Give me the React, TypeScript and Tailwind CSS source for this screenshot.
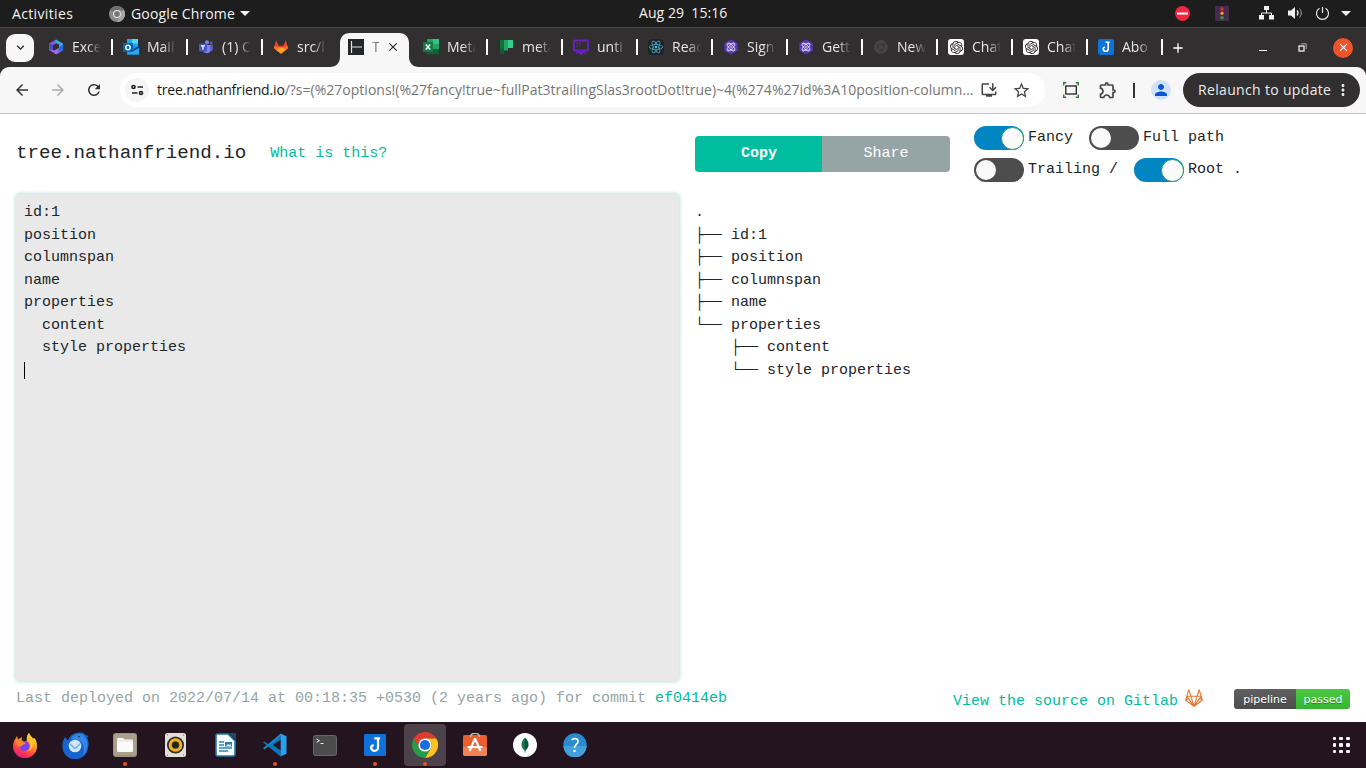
import React from "react";
import { SiReact, SiOpenai, SiGooglechrome } from "react-icons/si";
import {
  MdOutlineInstallDesktop,
  MdStarBorder,
  MdOutlineExtension,
  MdPerson,
  MdMoreVert,
  MdRefresh,
  MdArrowBack,
  MdArrowForward,
  MdClose,
  MdAdd,
  MdKeyboardArrowDown,
} from "react-icons/md";

const UI = "font-['Open_Sans','Noto_Sans',sans-serif]";
const MONO = "font-['Liberation_Mono',monospace]";

const CopilotIcon = () => (
  <svg width="16" height="16" viewBox="0 0 16 16">
    <path d="M8 .5 1 4.5v6.500L5 13V6l5-2.500z" fill="#7c5ce0" />
    <path d="M8 .5 15 4.500v7L11 8V5.500L7 3.500z" fill="#37a9ee" />
    <path d="M1 10.500 8 15.500l7-4L11 9 6 11.500z" fill="#9a6bea" />
    <path d="M11 8 15 6v5.500L10.500 13z" fill="#286ce0" />
    <path d="m1 4.500 4 1.500v5L1 10z" fill="#5748c8" />
  </svg>
);

const OutlookIcon = () => (
  <svg width="16" height="16" viewBox="0 0 16 16">
    <rect x="4" y="0" width="11" height="9" fill="#28a8ea" />
    <rect x="9" y="0" width="6" height="4.500" fill="#50d9ff" />
    <path d="M4 7h12v8.500H4z" fill="#1490df" />
    <path d="m4 14 12-7v8.500H4z" fill="#28a8ea" />
    <path d="M10 10.500 16 7v2l-6 3z" fill="#0a3a73" />
    <rect x="0" y="4" width="10" height="9" rx=".8" fill="#0364b8" />
    <circle cx="5" cy="8.500" r="2.200" fill="none" stroke="#fff" strokeWidth="1.400" />
  </svg>
);

const TeamsIcon = () => (
  <svg width="16" height="16" viewBox="0 0 16 16">
    <circle cx="9" cy="3.300" r="2.100" fill="#7b83eb" />
    <circle cx="13.200" cy="4" r="1.500" fill="#5059c9" />
    <path d="M10 6h5v4.500a2.600 2.600 0 0 1-5 0z" fill="#5059c9" />
    <path d="M5 6h7.500v5a3.800 3.800 0 0 1-7.500 0z" fill="#7b83eb" />
    <rect x="1" y="4.500" width="8" height="8" rx=".8" fill="#4b53bc" />
    <path d="M3 6.800h4M5 6.800v4" stroke="#fff" strokeWidth="1.200" />
  </svg>
);

const FoxIcon = () => (
  <svg width="18" height="16" viewBox="0 0 18 16">
    <path d="M9 15.500 1 9.500 3.500.5l3 6h5l3-6L17 9.500z" fill="#e24329" />
    <path d="m9 15.500-6-4.500 3-2.500h6l3 2.500z" fill="#fca326" />
    <path d="M1 9.500 2 6.500c2 .3 3.500 1.300 4.500 2.500L4 11.700zM17 9.500l-1-3c-2 .3-3.500 1.300-4.500 2.500l2.500 2.700z" fill="#fc6d26" />
  </svg>
);

const TreeIcon = () => (
  <svg width="16" height="16" viewBox="0 0 16 16">
    <rect width="16" height="16" fill="#23282c" />
    <path d="M3.500 2v12M3.500 8H14" stroke="#dfe3e4" strokeWidth="1.200" fill="none" />
  </svg>
);

const ExcelIcon = () => (
  <svg width="16" height="16" viewBox="0 0 16 16">
    <rect x="4" y="0" width="6" height="5" fill="#21a366" />
    <rect x="10" y="0" width="6" height="5" fill="#33c481" />
    <rect x="4" y="5" width="6" height="5.500" fill="#107c41" />
    <rect x="10" y="5" width="6" height="5.500" fill="#21a366" />
    <rect x="4" y="10.500" width="12" height="5" fill="#185c37" />
    <rect x="0" y="3" width="10" height="10" rx=".6" fill="#107c41" />
    <path d="m2.800 5.500 4.400 5m0-5-4.400 5" stroke="#fff" strokeWidth="1.500" />
  </svg>
);

const PlannerIcon = () => (
  <svg width="16" height="16" viewBox="0 0 16 16">
    <rect x="2" y="1" width="4" height="14" fill="#0f703b" />
    <rect x="6" y="1" width="4" height="10.500" fill="#21a366" />
    <rect x="10" y="1" width="5" height="8" fill="#33d08a" />
    <path d="M2 9.500h4V15H2z" fill="#185c37" />
  </svg>
);

const BoardIcon = () => (
  <svg width="16" height="16" viewBox="0 0 16 16" fill="none" stroke="#6b1fc0">
    <rect x="1" y="1.500" width="14" height="10" rx=".6" strokeWidth="1.900" />
    <path d="m3 15 2-3 2 3 1-1.500L9 15l2-3 2 3" strokeWidth="1.400" />
    <path d="M3.500 4.500H5M6 4.500h2M3.500 7H5M6 7h1" strokeWidth="1.300" />
  </svg>
);

const HexAtom = () => (
  <svg width="16" height="16" viewBox="0 0 16 16" fill="none" stroke="#e9e0fb">
    <path d="m8 .5 6.700 3.700v7.600L8 15.500l-6.700-3.700V4.200z" fill="#5a38b0" stroke="none" />
    <ellipse cx="8" cy="8" rx="5" ry="2" strokeWidth=".9" transform="rotate(45 8 8)" />
    <ellipse cx="8" cy="8" rx="5" ry="2" strokeWidth=".9" transform="rotate(-45 8 8)" />
    <path d="M4.500 5h7M4.500 11h7" strokeWidth=".7" />
    <circle cx="8" cy="8" r=".8" fill="#fff" stroke="none" />
  </svg>
);

const ReactTile = () => (
  <span className="flex size-4 items-center justify-center rounded-sm bg-[#20232a]">
    <SiReact size={14} color="#4fb9d3" />
  </span>
);

const GptIcon = () => (
  <span className="flex size-4 items-center justify-center rounded-[3px] bg-white">
    <SiOpenai size={13} color="#222" />
  </span>
);

const JIcon = ({ size = 16, round = 2.5 }: { size?: number; round?: number }) => (
  <svg width={size} height={size} viewBox="0 0 16 16">
    <rect width="16" height="16" rx={round} fill="#1071d8" />
    <path d="M7.500 3.200h4.200M10.200 3.200v6.500a2.500 2.500 0 0 1-5 .2c0-1 .7-1.700 1.900-1.700" fill="none" stroke="#fff" strokeWidth="1.600" />
  </svg>
);

type TabData = { title: string; icon: React.ReactNode; active?: boolean; bar?: boolean };

const tabs: TabData[] = [
  { title: "Exce", icon: <CopilotIcon />, bar: true },
  { title: "Mail", icon: <OutlookIcon />, bar: true },
  { title: "(1) C", icon: <TeamsIcon />, bar: true },
  { title: "src/l", icon: <FoxIcon /> },
  { title: "T", icon: <TreeIcon />, active: true },
  { title: "Meta", icon: <ExcelIcon />, bar: true },
  { title: "meta", icon: <PlannerIcon />, bar: true },
  { title: "unti", icon: <BoardIcon />, bar: true },
  { title: "Reac", icon: <ReactTile />, bar: true },
  { title: "Sign", icon: <HexAtom />, bar: true },
  { title: "Gett", icon: <HexAtom />, bar: true },
  { title: "New", icon: <SiGooglechrome size={14} color="#424649" />, bar: true },
  { title: "Chat", icon: <GptIcon />, bar: true },
  { title: "Chat", icon: <GptIcon />, bar: true },
  { title: "Abo", icon: <JIcon />, bar: true },
];

function Tab({ tab }: { tab: TabData }) {
  if (tab.active) {
    return (
      <div className="relative -mr-0.5 flex h-[34px] w-[77px] shrink-0 items-start pl-[2px]">
        <svg className="absolute -left-2.5 top-0" width="90" height="34" viewBox="0 0 90 34">
          <path d="M0 34c6 0 10-4 10-10V10C10 4 14 0 20 0h49c6 0 10 4 10 10v14c0 6 4 10 10 10z" fill="#f7f7f7" />
        </svg>
        <span className="relative ml-1.5 flex h-7 w-full items-center">
          <span className="flex size-4 items-center justify-center">{tab.icon}</span>
          <span className="ml-2 w-[9px] whitespace-nowrap pb-0.5 text-[14px] text-[#666] [mask-image:linear-gradient(to_right,rgba(0,0,0,.5),black_60%,transparent)]">{tab.title}</span>
          <MdClose className="ml-[5px]" size={14} color="#2e2e2e" />
        </span>
      </div>
    );
  }
  return (
    <div className="flex h-7 w-[75px] shrink-0 items-center pl-2">
      <span className="flex size-4 shrink-0 items-center justify-center">{tab.icon}</span>
      <span className="ml-2 w-[29px] whitespace-nowrap pb-0.5 text-[14px] text-[#e6e6e6] [mask-image:linear-gradient(to_right,black_55%,transparent)]">
        {tab.title}
      </span>
      {tab.bar && <span className="ml-[9.500px] h-4 w-0.5 shrink-0 bg-white" />}
    </div>
  );
}

function SystemBar() {
  return (
    <div className="flex h-7 items-center border-b border-[#484848] bg-[#1d1d1d] text-[14px] text-[#f2f2f2]">
      <span className="w-[97px] pb-px pl-3 tracking-[0.35px]">Activities</span>
      <svg className="ml-3" width="16" height="16" viewBox="0 0 16 16">
        <circle cx="8" cy="8" r="8" fill="#8b8b8b" />
        <path d="M8 0a8 8 0 0 1 7 4H8a4 4 0 0 0-3.500 2L1 4.200A8 8 0 0 1 8 0z" fill="#707070" />
        <path d="M15 4a8 8 0 0 1-7 12l3.500-6a4 4 0 0 0 0-4z" fill="#a5a5a5" />
        <circle cx="8" cy="8" r="3.900" fill="#ededed" />
        <circle cx="8" cy="8" r="2.900" fill="#777" />
      </svg>
      <span className="ml-1.5 w-[105px] whitespace-nowrap pb-px tracking-[0.15px]">Google Chrome</span>
      <svg className="ml-1" width="10" height="5" viewBox="0 0 10 5"><path d="M0 0h10L5 5z" fill="#f2f2f2" /></svg>
      <span className="ml-[389px] w-[95px] whitespace-pre pb-0.5 tracking-[0.05px]">Aug 29  15:16</span>
      <svg className="ml-[441px]" width="15" height="15" viewBox="0 0 15 15">
        <circle cx="7.500" cy="7.500" r="7.500" fill="#f0273f" />
        <path d="M2 7.500h11" stroke="#fff" strokeWidth="2" />
      </svg>
      <svg className="ml-[25px]" width="14" height="15" viewBox="0 0 14 15">
        <rect width="14" height="15" rx="1" fill="#482c4b" />
        <circle cx="7" cy="3" r="1.700" fill="#e8262e" />
        <circle cx="7" cy="7.300" r="1.700" fill="#e99830" />
        <circle cx="7" cy="11.700" r="1.700" fill="#2ea345" />
      </svg>
      <svg className="mb-px ml-[30px]" width="15" height="14" viewBox="0 0 15 14" fill="#f2f2f2">
        <path d="M5 0h5v4H5zM0 9h5v4.500H0zM10 9h5v4.500h-5z" />
        <path d="M7.500 4v3M2.500 9V7h10v2" fill="none" stroke="#f2f2f2" />
      </svg>
      <svg className="mb-px ml-3.5" width="15" height="14" viewBox="0 0 15 14" fill="none" stroke="#f2f2f2">
        <path d="M0 4.500h3L7 1v12L3 9.500H0z" fill="#f2f2f2" stroke="none" />
        <path d="M9 4.500c1.300 1.500 1.300 3.500 0 5" strokeWidth="1.200" />
        <path d="M11.500 2.500c2.300 2.600 2.300 6.400 0 9" stroke="#aaa" />
      </svg>
      <svg className="mb-px ml-3" width="15" height="15" viewBox="0 0 15 15" fill="none" stroke="#e8e8e8" strokeWidth="1.200">
        <path d="M4.500 2.200a6 6 0 1 0 6 0M7.500 1v6" />
      </svg>
      <svg className="ml-[11px]" width="10" height="5" viewBox="0 0 10 5"><path d="M0 0h10L5 5z" fill="#f2f2f2" /></svg>
    </div>
  );
}

function TabStrip() {
  return (
    <div className="flex h-[39px] items-center bg-[#322f30]">
      <span className="ml-1.5 flex size-7 items-center justify-center rounded-[9px] bg-[#f7f7f7]">
        <MdKeyboardArrowDown size={15} color="#222" />
      </span>
      <div className="ml-1.5 flex h-full items-end">
        {tabs.map((t, i) => (
          <div key={i} className={t.active ? "" : "mb-[6px]"}><Tab tab={t} /></div>
        ))}
      </div>
      <MdAdd className="ml-[5px]" size={16} color="#fff" />
      <span className="ml-[73px] mt-1.5 h-px w-2 bg-white" />
      <svg className="ml-[31px]" width="9" height="9" viewBox="0 0 9 9" fill="none" stroke="#eee">
        <rect x="1" y="3" width="5" height="5" strokeWidth="1.300" />
        <path d="M3 .8h5.200V6" stroke="#aaa" />
      </svg>
      <span className="ml-[26px] flex size-5 items-center justify-center rounded-full bg-[#f0532a]">
        <MdClose size={13} color="#fff" />
      </span>
    </div>
  );
}

function Toolbar() {
  return (
    <div className="bg-[#322f30]">
      <div className="flex h-[47px] items-center rounded-t-[9px] border-b border-[#c3c3c3] bg-[#f7f7f7]">
        <MdArrowBack className="ml-[13px]" size={18} color="#333" />
        <MdArrowForward className="ml-[18px]" size={18} color="#aaa" />
        <MdRefresh className="ml-[18px]" size={18} color="#333" />
        <div className="ml-[17px] flex h-[34px] w-[925px] items-center rounded-full bg-white">
          <span className="ml-[5px] flex size-6 items-center justify-center rounded-full bg-[#f5f5f5]">
            <svg width="13" height="12" viewBox="0 0 13 12" fill="none" stroke="#222" strokeWidth="1.700">
              <circle cx="2.500" cy="3" r="1.500" /><path d="M6.500 3H12M1 9h5.500" /><circle cx="10" cy="9" r="1.500" />
            </svg>
          </span>
          <span className="ml-2 w-[817px] whitespace-nowrap pb-0.5 text-[14px] tracking-[0.015px] text-[#757575]">
            <span className="tracking-[-0.17px] text-[#1a1a1a]">tree.nathanfriend.io</span>
            /?s=(%27options!(%27fancy!true~fullPat3trailingSlas3rootDot!true)~4(%274%27id%3A10position-column…
          </span>
          <MdOutlineInstallDesktop className="ml-1.5" size={18} color="#444" />
          <MdStarBorder className="ml-[13.500px]" size={19} color="#444" />
        </div>
        <svg className="ml-[18px]" width="16" height="16" viewBox="0 0 16 16" fill="none">
          <path d="M.7 3.500V.7h2.500M12.800.7h2.500v2.800M.7 12.500v2.800h2.500M12.800 15.300h2.500v-2.800" stroke="#2d8136" strokeWidth="1.400" />
          <rect x="2.800" y="4" width="10.500" height="8" stroke="#222" strokeWidth="1.300" />
        </svg>
        <MdOutlineExtension className="ml-[19px]" size={20} color="#444" />
        <span className="ml-[15px] h-[15px] w-0.5 bg-[#333]" />
        <span className="ml-4 flex size-5 items-center justify-center rounded-full bg-[#d0e2fb]">
          <MdPerson size={18} color="#0b57d0" />
        </span>
        <div className="ml-3 flex h-[34px] w-[177px] items-center rounded-full bg-[#322f30] text-[14px] text-[#ececec]">
          <span className="ml-[15px] w-[134px] whitespace-nowrap pb-0.5 tracking-[0.33px]">Relaunch to update</span>
          <MdMoreVert className="ml-0.5" size={18} />
        </div>
      </div>
    </div>
  );
}

function Toggle({ on, label }: { on: boolean; label: string }) {
  return (
    <label className="flex items-start">
      <span className={on ? "flex h-6 w-[50px] items-center justify-end rounded-full bg-[#0085c3]" : "flex h-6 w-[50px] items-center rounded-full bg-[#4d4d4d] pl-[2px]"}>
        <span className={on ? "size-[23px] rounded-full border border-[#18a052] bg-[#fafafa]" : "size-5 rounded-full bg-[#fafafa]"} />
      </span>
      <span className="ml-1 whitespace-pre pt-px leading-[22.5px]">{label}</span>
    </label>
  );
}

const source = "id:1\nposition\ncolumnspan\nname\nproperties\n  content\n  style properties\n";
const tree = [
  ".",
  "├── id:1",
  "├── position",
  "├── columnspan",
  "├── name",
  "└── properties",
  "    ├── content",
  "    └── style properties",
].join("\n");

function Page() {
  return (
    <main className={`${MONO} flex h-[608px] flex-col bg-white text-[15px] leading-[22.5px] text-[#212529]`}>
      <header className="flex h-[79px] shrink-0">
        <div className="flex w-[695px] items-center pl-4">
          <h1 className="text-[19.2px]">tree.nathanfriend.io</h1>
          <a className="ml-6 pt-px text-[#00bc9c]">What is this?</a>
        </div>
        <div className="mt-[22px] flex h-9 w-[255px] overflow-hidden rounded text-center leading-[34px] text-white">
          <button className="w-[127px] bg-[#00bda0] pl-px font-bold">Copy</button>
          <button className="w-32 bg-[#95a5a6]">Share</button>
        </div>
        <div className="ml-6 mt-3 flex h-14 flex-col gap-2">
          <div className="flex h-6 gap-4"><Toggle on label="Fancy" /><Toggle on={false} label="Full path" /></div>
          <div className="flex h-6 gap-4"><Toggle on={false} label="Trailing /" /><Toggle on label="Root ." /></div>
        </div>
      </header>
      <section className="flex h-[487.500px] shrink-0 pl-4 pt-[0.500px]">
        <div className="w-[663px] rounded bg-[#e9e9e9] p-2 pt-[8.500px] shadow-[0_0_4px_#91d5c1]">
          <pre className="font-[inherit]">{source}</pre>
          <div className="mt-[2.500px] h-[17px] w-px bg-black" />
        </div>
        <pre className="ml-4 pt-[8.500px] font-[inherit]">{tree}</pre>
      </section>
      <footer className="flex h-[41px] shrink-0 pl-4 text-[#95a5a6]">
        <span className="mt-[7.500px] w-[937px] whitespace-nowrap">
          Last deployed on 2022/07/14 at 00:18:35 +0530 (2 years ago) for commit <a className="text-[#00bc9c]">ef0414eb</a>
        </span>
        <a className="mt-[10.500px] whitespace-nowrap text-[#00bc9c]">View the source on Gitlab</a>
        <svg className="ml-[7px] mt-[8.500px]" width="18" height="18" viewBox="0 0 18 18" fill="none" stroke="#e9752e" strokeWidth="1.100" strokeLinejoin="round">
          <path d="M9 17.300.7 11.200 3.700.8 6 7.300h6L14.300.8l3 10.400zM1.700 7.300H6L9 17.300l3-10h4.300M1.700 7.300 9 17.300l7.300-10M.7 11.200l2.700-2L9 17.300l5.600-8.100 2.700 2" />
        </svg>
        <div className="ml-[31px] mt-[8.500px] flex h-5 w-[116px] overflow-hidden rounded-[3px] text-center font-['DejaVu_Sans',sans-serif] text-[11px] leading-[21px] text-white [text-shadow:0_1px_0_rgba(0,0,0,.3)]">
          <span className="w-[62px] bg-linear-to-b from-[#606060] to-[#4d4d4d]">pipeline</span>
          <span className="w-[54px] bg-linear-to-b from-[#4cc844] to-[#35b52d]">passed</span>
        </div>
      </footer>
    </main>
  );
}

const Firefox = () => (
  <svg width="26" height="26" viewBox="0 0 26 26">
    <defs>
      <linearGradient id="ff" x1=".8" y1="0" x2=".3" y2="1">
        <stop offset="0" stopColor="#fff13f" /><stop offset=".4" stopColor="#ff9a20" /><stop offset=".75" stopColor="#ff3a4a" /><stop offset="1" stopColor="#e31587" />
      </linearGradient>
    </defs>
    <path d="M3 7.500 5 4l1 3.500 4-2.500-.5 3.500 5 1L15 4l2-3.500c.8 3 3 4 4 6L22.500 6c2 3 2.500 5 2.500 8a12 12 0 0 1-24 .5c0-3 .8-5 2-7z" fill="url(#ff)" />
    <circle cx="12.500" cy="14" r="5" fill="#7a3ff0" />
    <path d="M5 9c2-2 4-1 6 1l3 1c-1 1-2 1.500-3.500 2-1 .5-1 2-3 1.500C5 14 4 11.500 5 9z" fill="#ff8c28" />
    <path d="M17 8c3 4 2 9-1.500 11 5-1 7-7 4-11z" fill="#ffca35" />
  </svg>
);

const Thunderbird = () => (
  <svg width="27" height="27" viewBox="0 0 27 27">
    <path d="M.5 14C.5 10 1.500 7 3 5l3 3.500C8 3 12 1 15.500 1c3-1 6-.5 8 2l3 1-1.500 2C27 9 27 12 26 16a12.500 12 0 0 1-25.500-2z" fill="#1764cf" />
    <path d="M9 7c4-7 12-6 14-2C27 11 26 19 20 24c4-7 2-15-5-16z" fill="#3287e4" />
    <circle cx="13" cy="14" r="6.300" fill="#cfe7fb" />
    <path d="m8 12 5 4.500 5.500-5" fill="none" stroke="#6caee8" strokeWidth="1.300" />
    <circle cx="17" cy="4.500" r=".8" fill="#102b66" />
  </svg>
);

const Files = () => (
  <svg width="24" height="24" viewBox="0 0 24 24">
    <rect width="24" height="24" rx="3" fill="#9b927f" /><rect x="1" y="1" width="22" height="21" rx="2" fill="#aaa18d" />
    <path d="M4 6.500C4 5.500 4.500 5 5.500 5H10l1.500 1.500h7c1 0 1.500.5 1.500 1.500v9.500c0 1-.5 1.500-1.500 1.500h-13c-1 0-1.500-.5-1.500-1.500z" fill="#fbfaf8" />
    <path d="M4 8h16" stroke="#e5dfd5" />
  </svg>
);

const Rhythmbox = () => (
  <svg width="21" height="24" viewBox="0 0 21 24">
    <rect width="21" height="24" rx="2.500" fill="#e4dfd8" />
    <circle cx="10.500" cy="12" r="8.600" fill="#35322f" /><circle cx="10.500" cy="12" r="5.300" fill="none" stroke="#f2b41c" strokeWidth="3" />
    <circle cx="10.500" cy="12" r="2.600" fill="#22211f" />
    <path d="M2 2h1M18 2h1M2 22h1M18 22h1" stroke="#777" />
  </svg>
);

const Writer = () => (
  <svg width="21" height="24" viewBox="0 0 21 24">
    <path d="M2.500 1H13l7 7v13c0 1-.5 2-2 2H3c-1 0-2-.5-2-2V3c0-1 .5-2 1.500-2z" fill="#f7fbfd" stroke="#237dad" strokeWidth="1.600" />
    <path d="M14 0h7v7z" fill="#15506f" />
    <path d="M4 9h5M4 12h5M4 15h13M4 18h9" stroke="#3186b5" strokeWidth="1.400" />
    <rect x="10" y="9" width="7" height="4.500" fill="#2c7ca9" /><path d="m11 13 2-2 1.500 1 1.500-1v2z" fill="#d8eef7" />
  </svg>
);

const VSCode = () => (
  <svg width="24" height="24" viewBox="0 0 24 24">
    <path d="m17.500.5-12 11L1.500 8.400 0 9.300l13 10.500 4.500 3.700z" fill="#0878bd" />
    <path d="M0 15.200 1.500 16.500 18 3V.5z" fill="#1688ce" />
    <path d="m17.500.5 6 2.800v17.400l-6 2.800z" fill="#2ba0ec" />
    <path d="m17.500 6.800-7.500 5.200 7.500 5.200z" fill="#23141f" />
  </svg>
);

const Terminal = () => (
  <svg width="24" height="21" viewBox="0 0 24 21">
    <rect x=".5" y=".5" width="23" height="20" rx="2" fill="#4b4b4b" stroke="#666" />
    <path d="m3.500 4 3 1.700-3 1.700M7.500 8.500h3" fill="none" stroke="#eee" />
  </svg>
);

const Chrome = () => (
  <svg width="26" height="26" viewBox="0 0 26 26">
    <path d="M1.800 6.500A13 13 0 0 1 24.300 6.500H13A6.500 6.500 0 0 0 7.400 16z" fill="#e33b2e" />
    <path d="M24.300 6.500A13 13 0 0 1 13 26l5.700-9.700A6.500 6.500 0 0 0 18 8.800L13 6.500z" fill="#fbc11c" />
    <path d="M1.800 6.500 7.400 16.200A6.500 6.500 0 0 0 14.500 19.300L18.700 16.300 13 26A13 13 0 0 1 1.800 6.500z" fill="#269b49" />
    <circle cx="13" cy="13" r="6.600" fill="#fff" /><circle cx="13" cy="13" r="5.100" fill="#1a6de0" />
  </svg>
);

const Software = () => (
  <svg width="24" height="24" viewBox="0 0 24 24" fill="none">
    <rect y="2" width="24" height="21" rx="2" fill="#ea5f2d" /><path d="M0 14h24v7a2 2 0 0 1-2 2H2a2 2 0 0 1-2-2z" fill="#ef8354" />
    <path d="M7.500 4c0-5 9-5 9 0" stroke="#d3bd9b" strokeWidth="1.400" />
    <path d="M12 5.500 6.500 18M12 5.500 17.500 18M4.500 14h15" stroke="#fff" strokeWidth="2.200" />
  </svg>
);

const Compass = () => (
  <svg width="24" height="24" viewBox="0 0 24 24">
    <circle cx="12" cy="12" r="12" fill="#fff" />
    <path d="M12 4.500c5 5 4.500 10 0 13.500z" fill="#00533d" /><path d="M12 4.500c-5 5-4.500 10 0 13.500z" fill="#127a4a" />
    <path d="M12 16v3.500" stroke="#567" strokeWidth=".9" />
  </svg>
);

const Help = () => (
  <svg width="24" height="24" viewBox="0 0 24 24">
    <circle cx="12" cy="12" r="11.700" fill="#278bce" /><path d="M.5 13h23a11.500 11.500 0 0 1-23 0z" fill="#43a0de" />
    <path d="M8.500 7c2-2 6.500-2 6.500 1.500 0 3-3.500 3-3.500 6.500" fill="none" stroke="#fff" strokeWidth="1.700" /><circle cx="11.500" cy="18" r="1.200" fill="#fff" />
  </svg>
);

const dock: { icon: React.ReactNode; running?: boolean; focused?: boolean }[] = [
  { icon: <Firefox /> },
  { icon: <Thunderbird /> },
  { icon: <Files />, running: true },
  { icon: <Rhythmbox /> },
  { icon: <Writer /> },
  { icon: <VSCode />, running: true },
  { icon: <Terminal /> },
  { icon: <JIcon size={22} round={1} />, running: true },
  { icon: <Chrome />, running: true, focused: true },
  { icon: <Software /> },
  { icon: <Compass /> },
  { icon: <Help /> },
];

function Dock() {
  return (
    <div className="flex h-[46px] items-center bg-[#23141f]">
      {dock.map((d, i) => (
        <div key={i} className="flex w-[50px] justify-center">
          <div className={d.focused ? "relative flex h-[42px] w-[42px] items-center justify-center rounded bg-[#4d424a]" : "relative flex h-[42px] w-[42px] items-center justify-center"}>
            {d.icon}
            {d.running && <span className="absolute bottom-0 left-[19px] size-1 rounded-full bg-[#e95420]" />}
          </div>
        </div>
      ))}
      <div className="ml-auto mr-[16.500px] grid grid-cols-3 gap-[3px]">
        {Array.from({ length: 9 }, (_, i) => <span key={i} className="size-[3.600px] rounded-[1px] bg-[#f5f5f5]" />)}
      </div>
    </div>
  );
}

export default function App() {
  return (
    <div className={`${UI} h-[768px] w-[1366px] overflow-hidden`}>
      <SystemBar />
      <TabStrip />
      <Toolbar />
      <Page />
      <Dock />
    </div>
  );
}
